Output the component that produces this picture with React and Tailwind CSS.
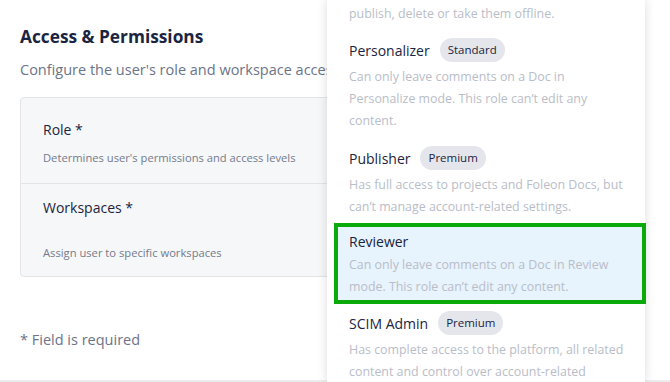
import React from "react";

const roles = [
  {
    name: "Personalizer",
    badge: "Standard",
    desc: ["Can only leave comments on a Doc in", "Personalize mode. This role can\u2019t edit any", "content."],
  },
  {
    name: "Publisher",
    badge: "Premium",
    desc: ["Has full access to projects and Foleon Docs, but", "can\u2019t manage account-related settings."],
  },
];

const Badge = ({ children }) => (
  <span className="inline-flex items-center h-6 px-[8px] rounded-full bg-[#e4e6eb] text-[11.5px] font-medium text-[#1b2440]">
    {children}
  </span>
);

const Desc = ({ lines }) => (
  <p className="text-[12.4px] leading-[22px] text-[#b9bdc8]">
    {lines.map((l, i) => (
      <span key={i} className="block whitespace-nowrap">{l}</span>
    ))}
  </p>
);

export default function App() {
  return (
    <div className="relative w-[670px] h-[382px] overflow-hidden bg-white flex flex-col font-['Open_Sans',_'Liberation_Sans',_sans-serif]">
      <div className="flex-1 px-5">
        <h1 className="mt-[25px] text-[17.3px] leading-6 font-bold text-[#1b2440]">Access &amp; Permissions</h1>
        <p className="mt-[11px] text-[14.5px] leading-5 text-[#6b7489] whitespace-nowrap">
          Configure the user's role and workspace access
        </p>

        <div className="mt-[17px] w-[340px] bg-[#f6f7f9] border border-[#e2e4e8] rounded">
          <div className="pl-[22px] pt-[22px] pb-[17px] border-b border-[#e2e4e8]">
            <div className="text-[14px] leading-5 text-[#1b2440]">Role *</div>
            <div className="mt-[10px] text-[11.2px] leading-4 text-[#737b8c]">Determines user's permissions and access levels</div>
          </div>
          <div className="pl-[22px] pt-[14px] pb-[15px]">
            <div className="text-[14px] leading-5 text-[#1b2440]">Workspaces *</div>
            <div className="mt-[27px] text-[11.2px] leading-4 text-[#737b8c]">Assign user to specific workspaces</div>
          </div>
        </div>

        <p className="mt-[53px] text-[14.5px] leading-5 text-[#6b7489]">* Field is required</p>
      </div>
      <div className="h-[2px] bg-[#ececee]" />

      <div className="absolute left-[327px] top-0 bottom-0 w-[318px] bg-white shadow-[0_0_10px_rgba(0,0,0,0.14)] z-10">
        <div className="pl-[22px] pt-[3px]">
          <Desc lines={["publish, delete or take them offline."]} />
        </div>

        {roles.map((r, i) => (
          <div key={r.name} className={`pl-[22px] ${i === 0 ? "mt-[13px]" : "mt-[14px]"}`}>
            <div className="h-6 flex items-center gap-[10px]">
              <span className="text-[14px] text-[#1b2440]">{r.name}</span>
              <Badge>{r.badge}</Badge>
            </div>
            <div className="mt-[4px]">
              <Desc lines={r.desc} />
            </div>
          </div>
        ))}

        <div className="mt-[5px] ml-[7px] w-[312px] border-4 border-[#0aaa0a] bg-[#e7f3fd] pl-[11px] pt-[2px] pb-[2px]">
          <div className="h-6 flex items-center text-[14px] text-[#1b2440]">Reviewer</div>
          <div className="mt-[1px]">
            <Desc lines={["Can only leave comments on a Doc in Review", "mode. This role can\u2019t edit any content."]} />
          </div>
        </div>

        <div className="pl-[22px] mt-[7px]">
          <div className="h-6 flex items-center gap-[10px]">
            <span className="text-[14px] text-[#1b2440]">SCIM Admin</span>
            <Badge>Premium</Badge>
          </div>
          <div className="mt-[4px]">
            <Desc lines={["Has complete access to the platform, all related", "content and control over account-related"]} />
          </div>
        </div>
      </div>
    </div>
  );
}
